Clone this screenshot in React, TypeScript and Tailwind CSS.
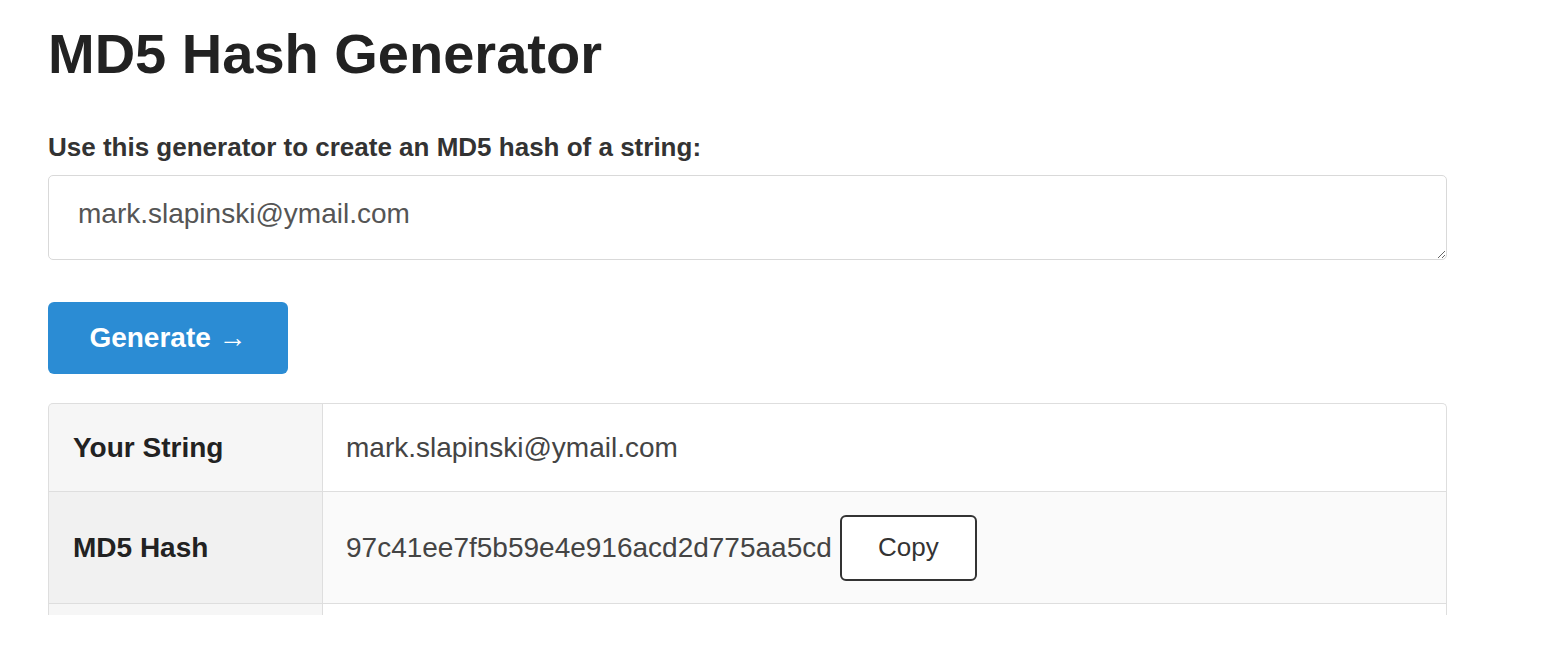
import React, { useState } from "react";

const font = { fontFamily: '"Liberation Sans", Arial, sans-serif' };

export default function App() {
    const [text, setText] = useState("mark.slapinski@ymail.com");
    const hash = "97c41ee7f5b59e4e916acd2d775aa5cd";

    return (
        <div className="h-[646px] w-[1554px] overflow-hidden bg-white" style={font}>
            <div className="w-[1447px] pl-[48px] pt-[26px]">
                <h1 className="text-[56px] font-bold leading-none text-[#222]">MD5 Hash Generator</h1>

                <label className="mt-[52px] block text-[26px] font-bold leading-none text-[#333]">
                    Use this generator to create an MD5 hash of a string:
                </label>

                <textarea
                    value={text}
                    onChange={(e) => setText(e.target.value)}
                    className="mt-[15px] block h-[85px] w-full resize-y rounded-[5px] border border-[#d9d9d9] px-[29px] pt-[17px] text-[28px] leading-[42px] text-[#555] outline-none"
                    style={font}
                />

                <button className="mt-[42px] flex h-[72px] w-[240px] items-center justify-center rounded-[6px] bg-[#2b8cd4] text-[28px] font-bold text-white" style={font}>
                    Generate →
                </button>

                <div className="mt-[29px] h-[212px] overflow-hidden">
                    <table className="w-full border-separate border-spacing-0 text-[28px]">
                        <tbody>
                            <tr className="h-[88px]">
                                <th className="w-[275px] rounded-tl-[5px] border-t border-l border-r border-[#dedede] bg-[#f6f6f6] px-[24px] text-left font-bold text-[#222]">
                                    Your String
                                </th>
                                <td className="rounded-tr-[5px] border-t border-r border-[#dedede] bg-white px-[23px] text-[#444]">{text}</td>
                            </tr>
                            <tr className="h-[112px]">
                                <th className="border-t border-l border-r border-[#dedede] bg-[#f1f1f1] px-[24px] text-left font-bold text-[#222]">
                                    MD5 Hash
                                </th>
                                <td className="border-t border-r border-[#dedede] bg-[#fafafa] px-[23px] text-[#444]">
                                    <div className="flex items-center gap-[8px]">
                                        <span>{hash}</span>
                                        <button className="h-[66px] w-[137px] rounded-[6px] border-2 border-[#333] bg-white text-[26px] text-[#333]" style={font}>
                                            Copy
                                        </button>
                                    </div>
                                </td>
                            </tr>
                            <tr className="h-[88px]">
                                <th className="border-t border-l border-r border-[#dedede] bg-[#f6f6f6]"></th>
                                <td className="border-t border-r border-[#dedede] bg-white"></td>
                            </tr>
                        </tbody>
                    </table>
                </div>
            </div>
        </div>
    );
}
